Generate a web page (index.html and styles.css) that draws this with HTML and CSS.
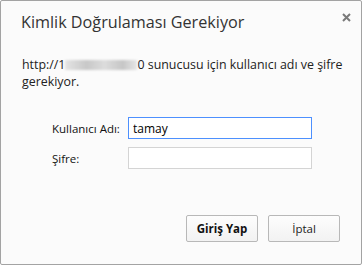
FILE: index.html
```html
<!DOCTYPE html>
<html lang="tr">
<head>
<meta charset="utf-8">
<title>Kimlik Doğrulaması Gerekiyor</title>
<link rel="stylesheet" href="styles.css">
</head>
<body>
<div class="dialog">
  <div class="header">
    <h1 class="title">Kimlik Doğrulaması Gerekiyor</h1>
    <button class="close" aria-label="Kapat">
      <svg width="9" height="9" viewBox="0 0 9 9"><path d="M1 1L8 8M8 1L1 8" stroke="#7a7a7a" stroke-width="2" fill="none"/></svg>
    </button>
  </div>
  <p class="message">http://1<span class="redacted"></span>0 sunucusu için kullanıcı adı ve şifre<br>gerekiyor.</p>
  <div class="form">
    <label class="label" for="user">Kullanıcı Adı:</label>
    <input class="field focused" id="user" type="text" value="tamay">
    <label class="label" for="pass">Şifre:</label>
    <input class="field" id="pass" type="password">
  </div>
  <div class="actions">
    <button class="btn primary">Giriş Yap</button>
    <button class="btn">İptal</button>
  </div>
</div>
</body>
</html>
```
FILE: styles.css
```css
html, body {
  margin: 0;
  padding: 0;
  background: #ffffff;
}
body {
  font-family: "Open Sans", "Noto Sans", "Liberation Sans", sans-serif;
  color: #222;
}
.dialog {
  box-sizing: border-box;
  width: 362px;
  height: 265px;
  border: 1px solid #a3a3a3;
  border-radius: 2px;
  background: #fbfbfb;
  display: flex;
  flex-direction: column;
}
.header {
  display: flex;
  justify-content: space-between;
  align-items: flex-start;
  padding: 10px 10px 0 20px;
}
.title {
  margin: 0;
  font-size: 16.2px;
  font-weight: normal;
  line-height: 22px;
  color: #333;
}
.close {
  margin: 2px 0 0 0;
  padding: 0;
  border: 0;
  background: none;
  width: 9px;
  height: 9px;
  display: flex;
}
.message {
  margin: 23px 6px 0 21px;
  font-size: 12.4px;
  line-height: 17px;
  color: #222;
  white-space: nowrap;
}
.redacted {
  display: inline-block;
  width: 72px;
  height: 10px;
  vertical-align: -1px;
  background: linear-gradient(90deg, #e4e4e4, #c8c8c8 30%, #dcdcdc 55%, #c6c6c6 80%, #e6e6e6);
  filter: blur(1px);
}
.form {
  display: grid;
  grid-template-columns: 76px 184px;
  row-gap: 8px;
  align-items: center;
  margin: 27px 0 0 51px;
}
.label {
  font-size: 11.5px;
  color: #111;
}
.field {
  box-sizing: border-box;
  width: 184px;
  height: 22px;
  margin: 0;
  padding: 0 4px;
  border: 1px solid #d4d4d4;
  background: #fff;
  font-family: inherit;
  font-size: 12px;
  color: #000;
  outline: none;
}
.field.focused {
  border-color: #4d90fe;
}
.actions {
  margin-top: auto;
  display: flex;
  justify-content: flex-end;
  gap: 10px;
  padding: 0 21px 22px 0;
}
.btn {
  box-sizing: border-box;
  width: 72px;
  height: 27px;
  border: 1px solid #b8b8b8;
  border-radius: 2px;
  background: linear-gradient(#fdfdfd, #f2f2f2);
  font-family: inherit;
  font-size: 11.5px;
  color: #222;
  padding: 0;
}
.btn.primary {
  font-weight: bold;
  color: #111;
}
```
